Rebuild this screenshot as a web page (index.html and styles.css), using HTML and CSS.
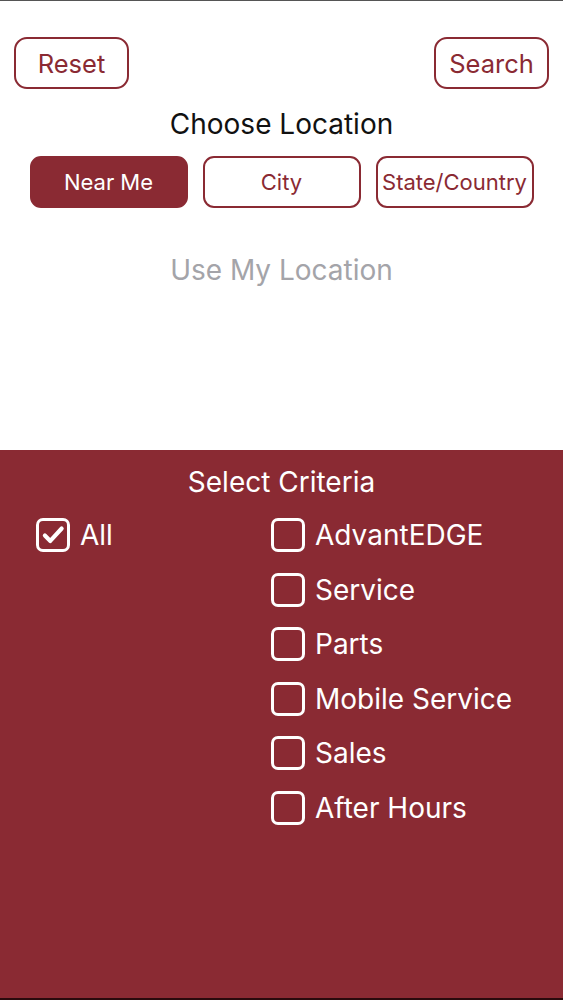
FILE: index.html
```html
<!DOCTYPE html>
<html lang="en">
<head>
    <meta charset="UTF-8">
    <meta name="viewport" content="width=device-width, initial-scale=1.0">
    <title>Find a Dealer</title>
    <link rel="stylesheet" href="styles.css">
</head>
<body>
    <div class="screen">
        <section class="location">
            <div class="actions">
                <button type="button" class="outline-btn">Reset</button>
                <button type="button" class="outline-btn">Search</button>
            </div>
            <h2 class="title">Choose Location</h2>
            <div class="segments">
                <button type="button" class="segment active">Near Me</button>
                <button type="button" class="segment">City</button>
                <button type="button" class="segment">State/Country</button>
            </div>
            <p class="use-location">Use My Location</p>
        </section>

        <section class="criteria">
            <h2 class="criteria-title">Select Criteria</h2>
            <div class="criteria-grid">
                <ul class="check-list">
                    <li class="check-item">
                        <span class="box checked">
                            <svg viewBox="0 0 24 24" width="26" height="26"><path d="M4.5 12.5l5 5L20 6" fill="none" stroke="#fff" stroke-width="3.8" stroke-linecap="round" stroke-linejoin="round"/></svg>
                        </span>
                        All
                    </li>
                </ul>
                <ul class="check-list">
                    <li class="check-item"><span class="box"></span>AdvantEDGE</li>
                    <li class="check-item"><span class="box"></span>Service</li>
                    <li class="check-item"><span class="box"></span>Parts</li>
                    <li class="check-item"><span class="box"></span>Mobile Service</li>
                    <li class="check-item"><span class="box"></span>Sales</li>
                    <li class="check-item"><span class="box"></span>After Hours</li>
                </ul>
            </div>
        </section>
    </div>
</body>
</html>
```

FILE: styles.css
```css
body {
    margin: 0;
    padding: 0;
    font-family: Inter, "Noto Sans", sans-serif;
    background-color: #fff;
}
.screen {
    width: 563px;
    height: 1000px;
    display: flex;
    flex-direction: column;
    border-top: 1px solid #555;
    border-bottom: 2px solid #2a0a0d;
    box-sizing: border-box;
    overflow: hidden;
}
.location {
    height: 449px;
    padding: 36px 14px 0;
    box-sizing: border-box;
}
.actions {
    display: flex;
    justify-content: space-between;
}
.outline-btn {
    width: 115px;
    height: 52px;
    background: #fff;
    border: 2px solid #8a2a33;
    border-radius: 13px;
    color: #8a2a33;
    font-family: inherit;
    font-size: 25.5px;
    padding: 0;
    cursor: pointer;
}
.title {
    margin: 18px 0 0;
    line-height: 34px;
    text-align: center;
    font-size: 28px;
    font-weight: 400;
    color: #111;
}
.segments {
    display: flex;
    gap: 15px;
    justify-content: center;
    margin-top: 15px;
}
.segment {
    width: 158px;
    height: 52px;
    background: #fff;
    border: 2px solid #8a2a33;
    border-radius: 11px;
    color: #8a2a33;
    font-family: inherit;
    font-size: 22px;
    padding: 0;
    white-space: nowrap;
    cursor: pointer;
}
.segment.active {
    background: #8a2a33;
    color: #fff;
}
.use-location {
    margin: 45px 0 0;
    line-height: 34px;
    text-align: center;
    font-size: 28px;
    color: #a4a4a9;
}
.criteria {
    flex: 1;
    background-color: #8a2a33;
    color: #fff;
    padding-top: 15px;
}
.criteria-title {
    margin: 0;
    line-height: 34px;
    text-align: center;
    font-size: 28px;
    font-weight: 400;
}
.criteria-grid {
    display: grid;
    grid-template-columns: 235px 1fr;
    padding: 9px 0 0 36px;
}
.check-list {
    list-style: none;
    margin: 0;
    padding: 0;
}
.check-item {
    display: flex;
    align-items: center;
    gap: 10px;
    height: 54.5px;
    font-size: 28px;
}
.box {
    width: 28px;
    height: 28px;
    border: 3px solid #fff;
    border-radius: 7px;
    display: flex;
    align-items: center;
    justify-content: center;
}
```
